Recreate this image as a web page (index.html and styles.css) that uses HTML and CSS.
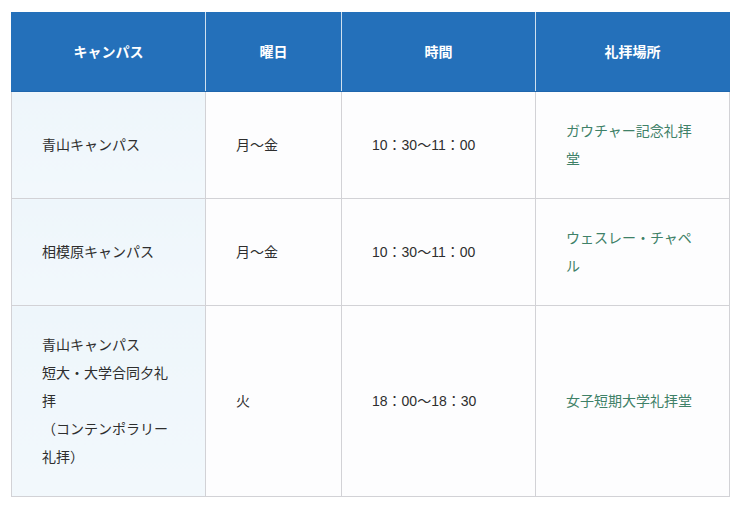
FILE: index.html
```html
<!DOCTYPE html>
<html lang="ja">
<head>
<meta charset="utf-8">
<link rel="stylesheet" href="styles.css">
</head>
<body>
<table class="schedule">
  <colgroup>
    <col class="c-campus">
    <col class="c-day">
    <col class="c-time">
    <col class="c-place">
  </colgroup>
  <thead>
    <tr>
      <th>キャンパス</th>
      <th>曜日</th>
      <th>時間</th>
      <th>礼拝場所</th>
    </tr>
  </thead>
  <tbody>
    <tr>
      <td class="campus">青山キャンパス</td>
      <td>月～金</td>
      <td>10：30～11：00</td>
      <td class="place">ガウチャー記念礼拝堂</td>
    </tr>
    <tr>
      <td class="campus">相模原キャンパス</td>
      <td>月～金</td>
      <td>10：30～11：00</td>
      <td class="place">ウェスレー・チャペル</td>
    </tr>
    <tr>
      <td class="campus">青山キャンパス<br>短大・大学合同夕礼拝<br>（コンテンポラリー礼拝）</td>
      <td>火</td>
      <td>18：00～18：30</td>
      <td class="place">女子短期大学礼拝堂</td>
    </tr>
  </tbody>
</table>
</body>
</html>
```
FILE: styles.css
```css
html, body {
  margin: 0;
  background: #ffffff;
}
body {
  padding: 12px 7px 0 11px;
  font-family: "Liberation Sans", "Noto Sans CJK JP", sans-serif;
  font-size: 14px;
  color: #2e2e2e;
}
.schedule {
  width: 718px;
  border-collapse: collapse;
  table-layout: fixed;
  border: 1px solid #cfd3d8;
}
.c-campus { width: 194px; }
.c-day { width: 136px; }
.c-time { width: 194px; }
.c-place { width: 194px; }
.schedule th {
  background: #2470ba;
  color: #ffffff;
  font-weight: bold;
  text-align: center;
  line-height: 28px;
  height: 78px;
  padding: 0 30px;
  border: 1px solid #cfe0ef;
  border-top-color: #2470ba;
  border-bottom-color: #1f66ad;
}
.schedule th:first-child { border-left-color: #2470ba; }
.schedule th:last-child { border-right-color: #2470ba; }
.schedule td {
  line-height: 28px;
  padding: 25px 30px 25px 30px;
  border: 1px solid #d2d2d6;
  background: #fdfdfe;
  vertical-align: middle;
  word-break: break-all;
}
.schedule tbody tr:first-child td { height: 56px; }
.schedule tbody tr:nth-child(2) td { height: 56px; }
.schedule td.campus {
  background: linear-gradient(180deg, #eef6fb 0%, #f2f8fc 100%);
}
.schedule td.place {
  color: #3f8168;
}
```
